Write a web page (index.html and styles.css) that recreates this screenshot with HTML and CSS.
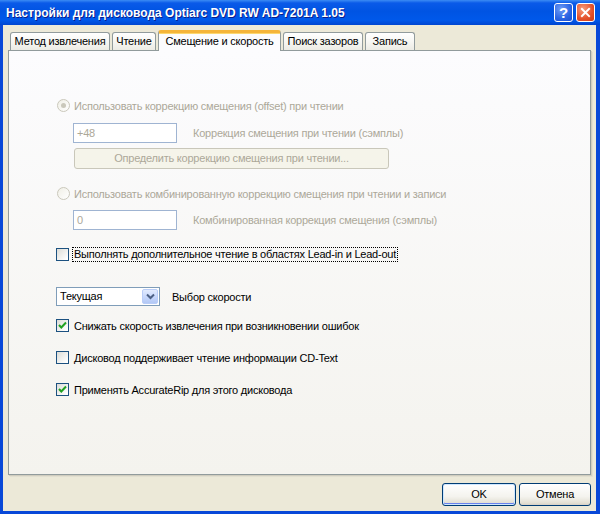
FILE: index.html
```html
<!DOCTYPE html>
<html lang="ru">
<head>
<meta charset="utf-8">
<title>Настройки для дисковода</title>
<link rel="stylesheet" href="styles.css">
</head>
<body>
<div class="window">
  <div class="titlebar">
    <span class="title">Настройки для дисковода Optiarc DVD RW AD-7201A 1.05</span>
    <div class="caption-btns">
      <div class="cbtn help">?</div>
      <div class="cbtn close">
        <svg width="19" height="19" viewBox="0 0 19 19"><path d="M5.5 5.5 L13.5 13.5 M13.5 5.5 L5.5 13.5" stroke="#fff" stroke-width="2.2" stroke-linecap="square" fill="none"/></svg>
      </div>
    </div>
  </div>
  <div class="client">
    <div class="tabs">
      <div class="tab t1">Метод извлечения</div>
      <div class="tab t2">Чтение</div>
      <div class="tab t3 active">Смещение и скорость</div>
      <div class="tab t4">Поиск зазоров</div>
      <div class="tab t5">Запись</div>
    </div>
    <div class="panel">
      <div class="row r-radio1 disabled">
        <span class="radio checked"><span class="dot"></span></span>
        <span class="lbl">Использовать коррекцию смещения (offset) при чтении</span>
      </div>
      <div class="row r-tb1 indent disabled">
        <span class="tb">+48</span>
        <span class="tblbl">Коррекция смещения при чтении (сэмплы)</span>
      </div>
      <div class="row r-btn indent disabled">
        <span class="dbtn">Определить коррекцию смещения при чтении...</span>
      </div>
      <div class="row r-radio2 disabled">
        <span class="radio"></span>
        <span class="lbl">Использовать комбинированную коррекцию смещения при чтении и записи</span>
      </div>
      <div class="row r-tb2 indent disabled">
        <span class="tb">0</span>
        <span class="tblbl">Комбинированная коррекция смещения (сэмплы)</span>
      </div>
      <div class="row r-chk1">
        <span class="chk"></span>
        <span class="clbl focus">Выполнять дополнительное чтение в областях Lead-in и Lead-out</span>
      </div>
      <div class="row r-combo">
        <span class="combo"><span class="cval">Текущая</span><span class="cdrop"><svg width="9" height="7" viewBox="0 0 9 7"><path d="M1 1.5 L4.5 5 L8 1.5" stroke="#4d6185" stroke-width="2" fill="none"/></svg></span></span>
        <span class="combolbl">Выбор скорости</span>
      </div>
      <div class="row r-chk2">
        <span class="chk"><svg width="11" height="11" viewBox="0 0 11 11"><path d="M2 5 L4.3 7.5 L9 2.5" stroke="#21a121" stroke-width="2" fill="none"/></svg></span>
        <span class="clbl">Снижать скорость извлечения при возникновении ошибок</span>
      </div>
      <div class="row r-chk3">
        <span class="chk"></span>
        <span class="clbl">Дисковод поддерживает чтение информации CD-Text</span>
      </div>
      <div class="row r-chk4">
        <span class="chk"><svg width="11" height="11" viewBox="0 0 11 11"><path d="M2 5 L4.3 7.5 L9 2.5" stroke="#21a121" stroke-width="2" fill="none"/></svg></span>
        <span class="clbl">Применять AccurateRip для этого дисковода</span>
      </div>
    </div>
    <div class="footer">
      <span class="btn default">OK</span>
      <span class="btn">Отмена</span>
    </div>
  </div>
</div>
</body>
</html>
```
FILE: styles.css
```css
html, body {
  margin: 0;
  padding: 0;
}
body {
  width: 600px;
  height: 514px;
  overflow: hidden;
  font-family: "Liberation Sans", "DejaVu Sans", sans-serif;
  font-size: 11px;
  letter-spacing: -0.22px;
  color: #000;
}
.window {
  width: 600px;
  height: 514px;
  display: flex;
  flex-direction: column;
  background: #0848d8;
  box-sizing: border-box;
}
.titlebar {
  height: 25px;
  flex: none;
  display: flex;
  align-items: center;
  justify-content: space-between;
  padding: 0 5px 0 6px;
  background: linear-gradient(180deg, #3c8cf4 0%, #0a5ae8 12%, #0054e3 45%, #0058ea 80%, #0046d0 100%);
}
.title {
  color: #fff;
  font-family: "Liberation Sans", "DejaVu Sans", sans-serif;
  font-weight: bold;
  font-size: 12px;
  letter-spacing: 0;
  text-shadow: 1px 1px 0 #0a1e8c;
  white-space: nowrap;
}
.caption-btns {
  display: flex;
  gap: 3px;
}
.cbtn {
  width: 19px;
  height: 19px;
  box-sizing: border-box;
  border: 1px solid #fff;
  border-radius: 3px;
  display: flex;
  align-items: center;
  justify-content: center;
}
.help {
  background: radial-gradient(circle at 35% 30%, #6e9cf6 0%, #2a64e2 60%, #1b4fd0 100%);
  color: #fff;
  font-weight: bold;
  font-size: 15px;
  letter-spacing: 0;
  font-family: "Liberation Sans", sans-serif;
}
.close {
  background: radial-gradient(circle at 35% 30%, #f59c7c 0%, #e4502a 60%, #cc3d14 100%);
}
.close svg { display: block; }
.client {
  flex: 1;
  margin: 0 4px 3px 3px;
  background: #ece9d8;
  display: flex;
  flex-direction: column;
  padding: 5px;
  box-sizing: border-box;
}
.tabs {
  height: 20px;
  display: flex;
  align-items: flex-end;
  gap: 2px;
  margin-left: 2px;
  position: relative;
  z-index: 2;
}
.tab {
  height: 18px;
  box-sizing: border-box;
  border: 1px solid #919b9c;
  border-bottom: none;
  border-radius: 3px 3px 0 0;
  background: linear-gradient(180deg, #ffffff 0%, #f7f7f3 50%, #ecebe4 100%);
  text-align: center;
  line-height: 17px;
  white-space: nowrap;
}
.t1 { width: 100px; }
.t2 { width: 44px; }
.t3 { width: 123px; }
.t4 { width: 80px; }
.t5 { width: 50px; }
.tab.active {
  height: 21px;
  margin-bottom: -1px;
  background: #fcfcfe;
  border-top: 3px solid #f5b53a;
  box-shadow: inset 0 1px 0 #fcd76f;
  line-height: 17px;
}
.panel {
  height: 425px;
  flex: none;
  box-sizing: border-box;
  border: 1px solid #919b9c;
  background: linear-gradient(180deg, #fcfcfe 0%, #f4f3ee 100%);
  box-shadow: 1px 1px 0 #d0cdbf, 2px 2px 0 #e2dfd0;
  padding: 48px 0 0 47px;
  position: relative;
  z-index: 1;
}
.row {
  display: flex;
  align-items: center;
  white-space: nowrap;
}
.indent { padding-left: 17px; }
.disabled { color: #aca899; }
.r-radio1 { height: 13px; }
.r-tb1 { height: 20px; margin-top: 11px; }
.r-btn { height: 21px; margin-top: 5px; }
.r-radio2 { height: 13px; margin-top: 18px; }
.r-tb2 { height: 20px; margin-top: 10px; }
.r-chk1 { height: 13px; margin-top: 18px; }
.r-combo { height: 19px; margin-top: 26px; }
.r-chk2 { height: 13px; margin-top: 13px; }
.r-chk3 { height: 13px; margin-top: 19px; }
.r-chk4 { height: 13px; margin-top: 19px; }
.radio {
  width: 13px;
  height: 13px;
  margin-left: 1px;
  box-sizing: border-box;
  border: 1px solid #cac8bb;
  border-radius: 50%;
  background: linear-gradient(135deg, #f0efe6 0%, #ffffff 100%);
  display: flex;
  align-items: center;
  justify-content: center;
  flex: none;
}
.radio .dot {
  width: 5px;
  height: 5px;
  border-radius: 50%;
  background: #cac8bb;
}
.lbl { margin-left: 4px; }
.tb {
  width: 104px;
  height: 20px;
  box-sizing: border-box;
  border: 1px solid #9fb4d2;
  background: #fff;
  padding-left: 3px;
  line-height: 18px;
  flex: none;
}
.tblbl { margin-left: 16px; }
.dbtn {
  width: 315px;
  height: 21px;
  box-sizing: border-box;
  border: 1px solid #c9c7ba;
  border-radius: 3px;
  background: #f5f4ea;
  text-align: center;
  line-height: 19px;
  margin-left: 1px;
}
.chk {
  width: 13px;
  height: 13px;
  box-sizing: border-box;
  border: 1px solid #1c5180;
  background: linear-gradient(135deg, #dcdcd7 0%, #ffffff 90%);
  display: flex;
  align-items: center;
  justify-content: center;
  flex: none;
}
.chk svg { display: block; }
.clbl { margin-left: 5px; }
.clbl.focus {
  margin-left: 3px;
  padding: 0 1px;
  border: 1px dotted #000;
  line-height: 13px;
}
.combo {
  width: 104px;
  height: 19px;
  box-sizing: border-box;
  border: 1px solid #7f9db9;
  background: #fff;
  display: flex;
  align-items: stretch;
  flex: none;
}
.cval {
  flex: 1;
  padding-left: 3px;
  line-height: 17px;
}
.cdrop {
  width: 16px;
  margin: 1px;
  box-sizing: border-box;
  border: 1px solid #b9cdf8;
  border-radius: 2px;
  background: linear-gradient(180deg, #e2ebfe 0%, #c4d5fb 60%, #b3c8f5 100%);
  display: flex;
  align-items: center;
  justify-content: center;
}
.cdrop svg { display: block; }
.combolbl { margin-left: 12px; }
.footer {
  margin-top: 8px;
  display: flex;
  justify-content: flex-end;
  gap: 3px;
}
.btn {
  height: 23px;
  box-sizing: border-box;
  border: 1px solid #003c74;
  border-radius: 3px;
  background: linear-gradient(180deg, #ffffff 0%, #f4f3ee 60%, #e3e0d4 90%, #d6d0c5 100%);
  text-align: center;
  line-height: 21px;
  width: 72px;
}
.btn.default {
  width: 74px;
  box-shadow: inset 0 0 0 1px #cee7ff, inset 0 -1px 0 1px #6982ee;
}
```
